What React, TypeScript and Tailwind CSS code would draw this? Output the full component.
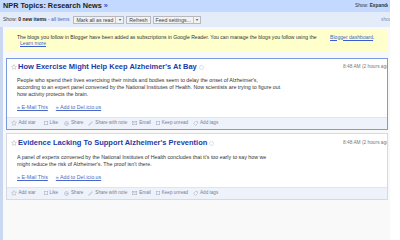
import React from "react";

const Star = () => (
  <svg width="6" height="6" viewBox="0 0 10 10" className="shrink-0">
    <path d="M5 0.8 L6.2 3.6 L9.3 3.8 L6.9 5.8 L7.7 8.9 L5 7.2 L2.3 8.9 L3.1 5.8 L0.7 3.8 L3.8 3.6 Z" fill="none" stroke="#b8b8b8" strokeWidth="0.9" />
  </svg>
);

const Icon = ({ kind }: { kind: string }) => {
  const s = "#a0a8b8";
  if (kind === "star") return <Star />;
  if (kind === "box")
    return (
      <svg width="4" height="4" viewBox="0 0 8 8" className="shrink-0">
        <rect x="0.5" y="0.5" width="7" height="7" fill="none" stroke={s} />
      </svg>
    );
  if (kind === "share")
    return (
      <svg width="5" height="5" viewBox="0 0 10 10" className="shrink-0">
        <circle cx="5" cy="5" r="4" fill="none" stroke={s} />
        <path d="M3 5 L7 5 M5 3 L7 5 L5 7" fill="none" stroke={s} />
      </svg>
    );
  if (kind === "note")
    return (
      <svg width="5" height="5" viewBox="0 0 10 10" className="shrink-0">
        <path d="M1 8 L8 1 L9 2 L2 9 Z" fill="none" stroke={s} />
      </svg>
    );
  if (kind === "mail")
    return (
      <svg width="5" height="4" viewBox="0 0 10 8" className="shrink-0">
        <rect x="0.5" y="0.5" width="9" height="7" fill="none" stroke={s} />
        <path d="M0.5 0.5 L5 4.5 L9.5 0.5" fill="none" stroke={s} />
      </svg>
    );
  return (
    <svg width="5" height="5" viewBox="0 0 10 10" className="shrink-0">
      <path d="M1 5 L5 1 L9 1 L9 5 L5 9 Z" fill="none" stroke={s} />
    </svg>
  );
};

const ActionBar = () => (
  <div className="flex h-[12px] items-center pl-[4px] text-[4.6px] text-[#7a8090] border-t bg-[#eef2fb] border-[#dde4f2]">
    <span className="flex items-center gap-[1.5px]"><Icon kind="star" />Add star</span>
    <span className="ml-[8px] flex items-center gap-[2px]"><Icon kind="box" />Like</span>
    <span className="ml-[6px] flex items-center gap-[2px]"><Icon kind="share" />Share</span>
    <span className="ml-[5px] flex items-center gap-[2px]"><Icon kind="note" />Share with note</span>
    <span className="ml-[5px] flex items-center gap-[2px]"><Icon kind="mail" />Email</span>
    <span className="ml-[5px] flex items-center gap-[2px]"><Icon kind="box" />Keep unread</span>
    <span className="ml-[5px] flex items-center gap-[2px]"><Icon kind="tag" />Add tags</span>
  </div>
);

const Entry = ({
  title,
  lines,
  selected,
}: {
  title: string;
  lines: string[];
  selected: boolean;
}) => (
  <div
    className={`ml-[3px] mr-[2px] overflow-hidden bg-white border ${
      selected ? "border-[#7c99e4]" : "border-[#d4d9e4]"
    }`}
  >
    <div className={`flex items-center h-[10px] ${selected ? "mt-[3px]" : "mt-[4px]"} pl-[4px]`}>
      <Star />
      <span className="ml-[1px] text-[7.5px] font-bold text-[#1d3ba8] whitespace-nowrap leading-[10px]">
        {title}
      </span>
      <svg width="5" height="5" viewBox="0 0 10 10" className="ml-[2px] shrink-0">
        <circle cx="5" cy="5" r="4" fill="none" stroke="#b9c3de" />
      </svg>
      <div className="flex-1" />
      <div className="w-[44px] overflow-hidden whitespace-nowrap text-[4.8px] text-[#777]">
        8:48 AM (2 hours ago)
      </div>
    </div>
    <div className={`pl-[10px] ${selected ? "mt-[5px]" : "mt-[6px]"} text-[5.3px] leading-[7px] text-[#333]`}>
      {lines.map((l, i) => (
        <div key={i} className="whitespace-nowrap">{l}</div>
      ))}
    </div>
    <div className={`pl-[10px] ${selected ? "mt-[6px]" : "mt-[5.5px]"} flex gap-[8px] text-[5.3px] leading-[7px] text-[#4a68c8]`}>
      <span className="underline">» E-Mail This</span>
      <span className="underline">» Add to Del.icio.us</span>
    </div>
    <div className={selected ? "mt-[6px]" : "mt-[6.5px]"}>
      <ActionBar />
    </div>
  </div>
);

export default function App() {
  return (
    <div
      className="w-[400px] h-[240px] overflow-hidden bg-white flex"
      style={{ fontFamily: '"Liberation Sans", Arial, sans-serif' }}
    >
      <div className="w-[390px] h-full flex flex-col overflow-hidden">
        <div className="h-[12px] shrink-0 bg-[#c3d9ff] flex items-center pl-[3px]">
          <span className="text-[7.3px] font-bold text-[#222] whitespace-nowrap">
            NPR Topics: Research News <span className="text-[#2a56c6]">»</span>
          </span>
          <div className="flex-1" />
          <div className="w-[33px] mr-[2px] overflow-hidden whitespace-nowrap text-[4.8px] text-[#333]">
            Show: <span className="font-bold">Expanded</span> - List
          </div>
        </div>
        <div className="h-[15px] shrink-0 bg-[#e5ecf9] flex items-center pl-[3px] text-[5px] text-[#444]">
          <span className="whitespace-nowrap">
            Show: <span className="font-bold text-[#222]">0 new items</span> -{" "}
            <span className="text-[#3a5fcd]">all items</span>
          </span>
          <div className="ml-[4px] h-[8px] flex border border-[#b5b9c2] bg-[#f2f2f2] text-[5.2px] text-[#444]">
            <span className="px-[2px] leading-[6px] whitespace-nowrap">Mark all as read</span>
            <span className="w-[8px] border-l border-[#c5c8cf] text-center leading-[6px] text-[4px]">▾</span>
          </div>
          <div className="ml-[2px] h-[8px] px-[2px] border border-[#b5b9c2] bg-[#f2f2f2] text-[5.2px] leading-[6px] text-[#444] whitespace-nowrap">
            Refresh
          </div>
          <div className="ml-[2px] h-[8px] flex border border-[#b5b9c2] bg-[#f2f2f2] text-[5.2px] text-[#444]">
            <span className="px-[2px] leading-[6px] whitespace-nowrap">Feed settings...</span>
            <span className="w-[7px] border-l border-[#c5c8cf] text-center leading-[6px] text-[4px]">▾</span>
          </div>
          <div className="flex-1" />
          <div className="w-[9px] overflow-hidden whitespace-nowrap text-[4.8px] text-[#7a8db8]">
            show details
          </div>
        </div>
        <div className="flex-1 border-l-[3px] border-[#c9d7f1] bg-[#f9f9fa] pt-[2px]">
          <div className="ml-[2px] mr-[2px] h-[22px] bg-[#ffffcc] pl-[12px] pt-[4.5px] text-[5.1px] leading-[6.5px] text-[#333]">
            <div className="whitespace-nowrap">
              The blogs you follow in Blogger have been added as subscriptions in Google Reader. You can manage the blogs you follow using the{" "}
              <span className="ml-[12px] underline text-[#3a5fcd]">Blogger dashboard</span>.
            </div>
            <div className="pl-[3px] underline text-[#3a5fcd]">Learn more</div>
          </div>
          <div className="mt-[7px]">
            <Entry
              selected
              title="How Exercise Might Help Keep Alzheimer's At Bay"
              lines={[
                "People who spend their lives exercising their minds and bodies seem to delay the onset of Alzheimer's,",
                "according to an expert panel convened by the National Institutes of Health. Now scientists are trying to figure out",
                "how activity protects the brain.",
              ]}
            />
          </div>
          <div className="mt-[3px]">
            <Entry
              selected={false}
              title="Evidence Lacking To Support Alzheimer's Prevention"
              lines={[
                "A panel of experts convened by the National Institutes of Health concludes that it's too early to say how we",
                "might reduce the risk of Alzheimer's. The proof isn't there.",
              ]}
            />
          </div>
        </div>
      </div>
      <div className="flex-1 bg-white" />
    </div>
  );
}
